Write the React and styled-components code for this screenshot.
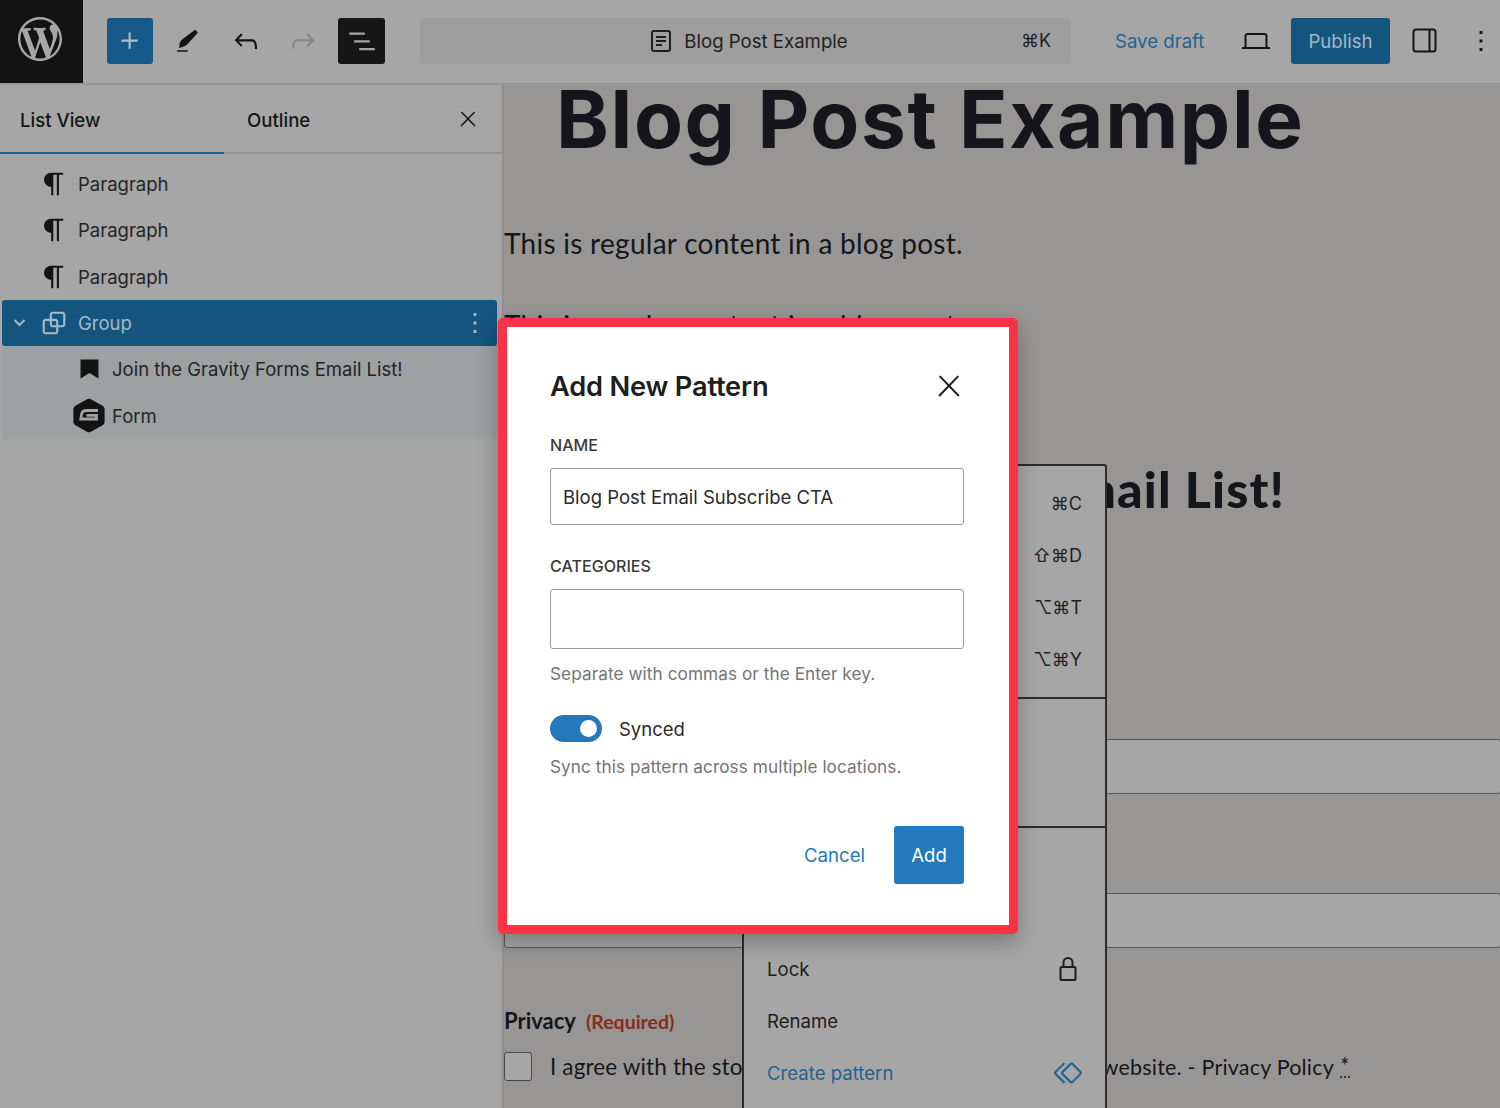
import React from 'react'
import styled, { createGlobalStyle } from 'styled-components'

const GlobalStyle = createGlobalStyle`
  html, body {
    margin: 0;
    padding: 0;
    height: 100%;
    overflow: hidden;
    background: #a6a6a6;
    font-family: Inter, 'Liberation Sans', sans-serif;
    color: #1a1a1a;
  }
  * { box-sizing: border-box; }
`

const Page = styled.div`
  position: relative;
  width: 1500px;
  height: 1108px;
  overflow: hidden;
`
const TopBar = styled.header`
  display: flex;
  align-items: center;
  height: 85px;
  padding-bottom: 2px;
  border-bottom: 2px solid #989898;
  background: #a6a6a6;
  white-space: nowrap;
`
const LogoBox = styled.div`
  display: flex;
  flex: none;
  align-items: center;
  justify-content: center;
  width: 83px;
  height: 85px;
  padding: 0 3px 3px 0;
  background: #131313;
  color: #a6a6a6;
`
const ToolGroup = styled.div`
  display: flex;
  flex: none;
  align-items: center;
  margin-left: ${(p) => p.$left || 0}px;
`
const ToolButton = styled.div`
  display: flex;
  flex: none;
  align-items: center;
  justify-content: center;
  width: ${(p) => p.$w || 46}px;
  height: 46px;
  margin-left: ${(p) => p.$left || 0}px;
  border-radius: 3px;
  background: ${(p) => p.$bg || 'transparent'};
  color: ${(p) => p.$color || '#141414'};
`
const CommandCenter = styled.div`
  position: relative;
  display: flex;
  flex: none;
  align-items: center;
  justify-content: center;
  gap: 11px;
  width: 651px;
  height: 46px;
  margin-left: 35px;
  padding-left: 6px;
  border-radius: 5px;
  background: #9e9e9e;
  font-size: 18.6px;
  color: #1f1f1f;
`
const Shortcut = styled.span`
  position: absolute;
  right: 20px;
  font-size: 18px;
  color: #1f1f1f;
`
const SaveDraft = styled.span`
  flex: none;
  width: 89px;
  margin-left: 44px;
  font-size: 18.6px;
  color: #1f6391;
`
const PublishButton = styled.div`
  display: flex;
  flex: none;
  align-items: center;
  justify-content: center;
  width: 99px;
  height: 46px;
  margin-left: 12px;
  border-radius: 3px;
  background: #14567f;
  color: #a6b6c2;
  font-size: 18.6px;
`
const Workspace = styled.div`
  display: flex;
  height: 1023px;
`
const Sidebar = styled.aside`
  flex: none;
  width: 504px;
  border-right: 2px solid #8f8f8f;
  background: #a6a6a6;
`
const Tabs = styled.div`
  display: flex;
  align-items: center;
  height: 69px;
  border-bottom: 2px solid #929292;
`
const Tab = styled.div`
  display: flex;
  align-items: center;
  width: 224px;
  height: 69px;
  margin-bottom: -2px;
  padding: 3px 0 0 ${(p) => p.$pad}px;
  border-bottom: 2px solid ${(p) => (p.$active ? '#1b5f8c' : 'transparent')};
  font-size: 18.6px;
  font-weight: 500;
  color: #161616;
`
const TabClose = styled.div`
  display: flex;
  margin-left: auto;
  margin-right: 22px;
  color: #161616;
`
const ListTree = styled.div`
  display: flex;
  flex-direction: column;
  width: 495px;
  margin-left: 2px;
  padding-top: 7px;
`
const Row = styled.div`
  display: flex;
  align-items: center;
  height: 46.3px;
  padding-left: ${(p) => p.$pad || 0}px;
  font-size: 18.5px;
  color: #242424;
`
const GroupRow = styled(Row)`
  border-radius: 3px;
  background: #14547f;
  color: #a3bacb;
`
const GroupChildren = styled.div`
  border-radius: 0 0 3px 3px;
  background: #9da1a2;
`
const RowIcon = styled.div`
  display: flex;
  flex: none;
  align-items: center;
  justify-content: center;
  width: ${(p) => p.$w || 34}px;
  margin-right: ${(p) => p.$gap || 7}px;
  color: ${(p) => p.$color || '#141414'};
`
const RowMore = styled.div`
  display: flex;
  margin-left: auto;
  margin-right: 5px;
`
const Canvas = styled.main`
  position: relative;
  flex: 1;
  overflow: hidden;
  background: #979694;
  color: #14161b;
  font-family: Lato, 'Open Sans', sans-serif;
`
const PostTitle = styled.h1`
  margin: 0 0 0 52px;
  height: 103px;
  font-family: Inter, sans-serif;
  font-size: 80px;
  line-height: 68px;
  font-weight: 700;
  letter-spacing: 1.65px;
  white-space: nowrap;
`
const BodyText = styled.p`
  margin: 0;
  height: ${(p) => p.$h || 78}px;
  padding-top: ${(p) => p.$pad || 37}px;
  font-size: 28px;
  line-height: 36px;
  letter-spacing: 0.27px;
  white-space: nowrap;
`
const FormHeading = styled.h2`
  margin: 111px 0 0;
  height: 64px;
  font-size: 50px;
  line-height: 60px;
  font-weight: 900;
  letter-spacing: 1.15px;
  white-space: nowrap;
`
const FakeInput = styled.div`
  width: 997px;
  height: 55px;
  margin-top: ${(p) => p.$top}px;
  border: 1.5px solid #55585c;
  border-radius: 3px;
  background: #a6a6a6;
`
const PrivacyLabel = styled.div`
  margin-top: 59px;
  font-size: 22px;
  line-height: 28px;
  font-weight: 700;
  white-space: nowrap;
`
const Required = styled.span`
  margin-left: 10px;
  font-size: 19.5px;
  color: #8a2a1c;
`
const ConsentRow = styled.div`
  display: flex;
  align-items: center;
  margin-top: 16px;
  font-size: 22.5px;
  letter-spacing: 0.13px;
  white-space: nowrap;
`
const ConsentTail = styled.span`
  margin-left: 0;
  font-size: 21.5px;
  letter-spacing: 0.2px;
`
const CheckBox = styled.span`
  flex: none;
  width: 28px;
  height: 29px;
  margin-right: 18px;
  border: 1.5px solid #45484c;
  border-radius: 3px;
  background: #a6a6a6;
`
const Asterisk = styled.span`
  margin-left: 6px;
  border-bottom: 2px dotted #33363a;
  line-height: 20px;
`
const BlockMenu = styled.div`
  position: absolute;
  top: 379px;
  left: 238px;
  width: 365px;
  height: 700px;
  border: 2px solid #2c2c2c;
  border-radius: 3px;
  background: #a6a6a6;
  font-family: Inter, sans-serif;
`
const MenuSection = styled.div`
  height: ${(p) => p.$h}px;
  padding: 11px 0;
  border-top: ${(p) => (p.$first ? 'none' : '2px solid #2c2c2c')};
`
const MenuRow = styled.div`
  display: flex;
  align-items: center;
  justify-content: space-between;
  height: 52px;
  padding: 0 23px;
  font-size: 18.6px;
  color: ${(p) => p.$color || '#1d1d1d'};
`
const MenuKeys = styled.span`
  font-size: 18px;
  color: #222;
`
const LockWrap = styled.span`
  display: flex;
  margin-right: 4px;
`
const SymbolWrap = styled.span`
  display: flex;
  margin-right: -3px;
`
const Modal = styled.div`
  position: absolute;
  top: 318px;
  left: 498px;
  width: 520px;
  height: 616px;
  padding: 40px 45px 0 43px;
  border: 9px solid #fb3246;
  border-radius: 5px;
  background: #fff;
  box-shadow: 0 8px 22px rgba(0, 0, 0, 0.28);
  color: #1e1e1e;
`
const ModalHead = styled.div`
  display: flex;
  align-items: center;
  justify-content: space-between;
  height: 38px;
`
const ModalTitle = styled.h2`
  margin: 0;
  font-size: 27.25px;
  font-weight: 600;
  letter-spacing: -0.2px;
`
const ModalClose = styled.div`
  display: flex;
  margin-right: -2px;
`
const FieldLabel = styled.label`
  display: block;
  margin-top: ${(p) => p.$top}px;
  font-size: 16.1px;
  line-height: 22px;
  font-weight: 500;
  color: #3a3a3a;
`
const TextField = styled.div`
  display: flex;
  align-items: center;
  height: ${(p) => p.$h}px;
  margin-top: 12px;
  padding-left: 12px;
  border: 1.5px solid #9a9a9a;
  border-radius: 3px;
  font-size: 18.5px;
  color: #2a2a2a;
`
const HelpText = styled.p`
  margin: ${(p) => p.$top}px 0 0;
  font-size: 17.2px;
  line-height: 24px;
  letter-spacing: 0.07px;
  color: #757575;
`
const ToggleRow = styled.div`
  display: flex;
  align-items: center;
  gap: 17px;
  margin-top: 29px;
  font-size: 18.5px;
  color: #2a2a2a;
`
const Toggle = styled.span`
  display: flex;
  align-items: center;
  justify-content: flex-end;
  width: 52px;
  height: 27px;
  padding-right: 5px;
  border-radius: 14px;
  background: #2379bb;
  &::after {
    content: '';
    width: 17px;
    height: 17px;
    border-radius: 50%;
    background: #fff;
  }
`
const ModalActions = styled.div`
  display: flex;
  align-items: center;
  justify-content: flex-end;
  gap: 29px;
  margin-top: 47px;
`
const CancelLink = styled.span`
  font-size: 18.6px;
  color: #2379bb;
`
const AddButton = styled.div`
  display: flex;
  align-items: center;
  justify-content: center;
  width: 70px;
  height: 58px;
  border-radius: 3px;
  background: #2379bb;
  color: #fff;
  font-size: 18.6px;
`

function Icon({ size = 24, box = 24, d, children, ...rest }) {
  return (
    <svg width={size} height={size} viewBox={`0 0 ${box} ${box}`} fill="currentColor" {...rest}>
      {d && <path d={d} />}
      {children}
    </svg>
  )
}

const wp =
  'M20 10c0-5.51-4.49-10-10-10C4.48 0 0 4.49 0 10c0 5.52 4.48 10 10 10 5.51 0 10-4.48 10-10zM7.78 15.37L4.37 6.22c.55-.02 1.17-.08 1.17-.08.5-.06.44-1.13-.06-1.11 0 0-1.45.11-2.37.11-.18 0-.37 0-.58-.01C4.12 2.69 6.87 1.11 10 1.11c2.33 0 4.45.87 6.05 2.34-.68-.11-1.65.39-1.65 1.58 0 .74.45 1.36.9 2.1.35.61.55 1.36.55 2.46 0 1.49-1.4 5-1.4 5l-3.03-8.37c.54-.02.82-.17.82-.17.5-.05.44-1.25-.06-1.22 0 0-1.44.12-2.38.12-.87 0-2.33-.12-2.33-.12-.5-.03-.56 1.2-.06 1.22l.92.08 1.26 3.41zM17.41 10c.24-.64.74-1.87.43-4.25.7 1.29 1.05 2.71 1.05 4.25 0 3.29-1.73 6.24-4.4 7.78.97-2.59 1.94-5.2 2.92-7.78zM6.1 18.09C3.12 16.65 1.11 13.53 1.11 10c0-1.3.23-2.48.72-3.59C3.25 10.3 4.67 14.2 6.1 18.09zm4.03-6.63l2.58 6.98c-.86.29-1.76.45-2.71.45-.79 0-1.57-.11-2.29-.33.81-2.38 1.62-4.74 2.42-7.1z'
const plus = 'M11 12.5V17.5H12.5V12.5H17.5V11H12.5V6H11V11H6V12.5H11Z'
const undo =
  'M18.3 11.7c-.6-.6-1.4-.9-2.3-.9H6.7l2.9-3.3-1.1-1-4.5 5L8.5 16l1-1-2.7-2.7H16c.5 0 .9.2 1.3.5 1 1 1 3.4 1 4.5v.3h1.5v-.2c0-1.5 0-4.3-1.5-5.7z'
const redo =
  'M15.6 6.5l-1.1 1 2.9 3.3H8c-.9 0-1.7.3-2.3.9-1.4 1.5-1.4 4.2-1.4 5.6v.2h1.5v-.3c0-1.1 0-3.5 1-4.5.3-.3.7-.5 1.3-.5h9.2L14.5 15l1.1 1.1 4.6-4.6-4.6-5z'
const listView = 'M3 6h11v1.5H3V6Zm3.5 5.5h11V13h-11v-1.5ZM21 17H10v1.5h11V17Z'
const paragraph =
  'm9.99609 14v-.2251l.00391.0001v6.225h1.5v-14.5h2.5v14.5h1.5v-14.5h3v-1.5h-8.50391c-2.76142 0-5 2.23858-5 5 0 2.7614 2.23858 5 5 5z'
const group =
  'M18 4h-7c-1.1 0-2 .9-2 2v3H6c-1.1 0-2 .9-2 2v7c0 1.1.9 2 2 2h7c1.1 0 2-.9 2-2v-3h3c1.1 0 2-.9 2-2V6c0-1.1-.9-2-2-2zm-4.5 14c0 .3-.2.5-.5.5H6c-.3 0-.5-.2-.5-.5v-7c0-.3.2-.5.5-.5h3V13c0 1.1.9 2 2 2h2.5v3zm0-4.5H11c-.3 0-.5-.2-.5-.5v-2.5H13c.3 0 .5.2.5.5v2.5zm5-.5c0 .3-.2.5-.5.5h-3V11c0-1.1-.9-2-2-2h-2.5V6c0-.3.2-.5.5-.5h7c.3 0 .5.2.5.5v7z'
const kebab = 'M13 19h-2v-2h2v2zm0-6h-2v-2h2v2zm0-6h-2V5h2v2z'
const close =
  'M13 11.8l6.1-6.3-1-1-6.1 6.2-6.1-6.2-1 1 6.1 6.3-6.5 6.7 1 1 6.5-6.6 6.5 6.6 1-1z'
const symbol =
  'M21.3 10.8l-5.6-5.6c-.7-.7-1.8-.7-2.5 0l-5.6 5.6c-.7.7-.7 1.8 0 2.5l5.6 5.6c.3.3.8.5 1.2.5s.9-.2 1.2-.5l5.6-5.6c.8-.7.8-1.9.1-2.5zm-1 1.4l-5.6 5.6c-.1.1-.3.1-.4 0l-5.6-5.6c-.1-.1-.1-.3 0-.4l5.6-5.6s.1-.1.2-.1.1 0 .2.1l5.6 5.6c.1.1.1.3 0 .4zm-16.6-.4L10 5.5l-1-1-6.3 6.3c-.7.7-.7 1.8 0 2.5L9 19.5l1.1-1.1-6.3-6.3c-.2 0-.2-.2-.1-.3z'

function PenIcon() {
  return (
    <Icon size={34}>
      <path d="M5 18.5h7.5v1.1H5zM17.2 4.4c.4-.2.8-.2 1.1.1l.9 1c.3.3.3.8.1 1.1l-6.5 7.2c-.7.8-1.7 1.5-2.6 1.9L6.4 17l.4-3.5c.3-1 .9-1.9 1.7-2.6z" />
    </Icon>
  )
}

function DocIcon() {
  return (
    <svg width="24" height="26" viewBox="0 0 24 26" fill="none" stroke="currentColor" strokeWidth="2">
      <rect x="3" y="3" width="18" height="20" rx="2" />
      <path d="M7 9h10M7 13h10M7 17h6" />
    </svg>
  )
}

function LaptopIcon() {
  return (
    <svg width="30" height="20" viewBox="0 0 30 20" fill="none" stroke="currentColor" strokeWidth="2">
      <path d="M4.5 16V5a2 2 0 0 1 2-2h17a2 2 0 0 1 2 2v11" />
      <path d="M1 17h28" />
    </svg>
  )
}

function PanelIcon() {
  return (
    <svg width="25" height="25" viewBox="0 0 25 25" fill="none" stroke="currentColor" strokeWidth="2">
      <rect x="1.5" y="1.5" width="22" height="22" rx="2.5" />
      <path d="M17.5 1.5v22" />
    </svg>
  )
}

function LockIcon() {
  return (
    <svg width="20" height="26" viewBox="0 0 20 26" fill="none" stroke="currentColor" strokeWidth="2">
      <rect x="2.5" y="11" width="15" height="13" rx="1" />
      <path d="M5.5 11V6.5a4.5 4.5 0 0 1 9 0V11" />
    </svg>
  )
}

function BookmarkIcon() {
  return (
    <svg width="19" height="20" viewBox="0 0 19 20">
      <path d="M0.5 0.5h18v19l-9-5.5-9 5.5z" fill="currentColor" />
    </svg>
  )
}

function FormIcon() {
  return (
    <svg width="32" height="35" viewBox="0 0 32 35">
      <path
        d="M14 1.2c1.2-.7 2.8-.7 4 0l11.6 6.6c1.2.7 2 2 2 3.4v12.6c0 1.4-.8 2.7-2 3.4L18 33.8c-1.2.7-2.8.7-4 0L2.4 27.2c-1.2-.7-2-2-2-3.4V11.2c0-1.4.8-2.7 2-3.4z"
        fill="#131313"
      />
      <path
        d="M25 12.5H13c-2.5 0-4 1.5-4.5 4l-.7 4.5H23.5v-3.6H13.5"
        fill="none"
        stroke="#a0a3a4"
        strokeWidth="2.8"
      />
    </svg>
  )
}

function ParagraphRow() {
  return (
    <Row $pad={35}>
      <RowIcon>
        <Icon size={34} d={paragraph} />
      </RowIcon>
      Paragraph
    </Row>
  )
}

export default function App() {
  return (
    <Page>
      <GlobalStyle />
      <TopBar>
        <LogoBox>
          <Icon size={44} box={20} d={wp} />
        </LogoBox>
        <ToolGroup $left={24}>
          <ToolButton $bg="#165a8a" $color="#a3c0d3">
            <Icon size={34} d={plus} />
          </ToolButton>
          <ToolButton $left={11}>
            <PenIcon />
          </ToolButton>
          <ToolButton $left={13}>
            <Icon size={34} d={undo} />
          </ToolButton>
          <ToolButton $left={11} $color="#868686">
            <Icon size={34} d={redo} />
          </ToolButton>
          <ToolButton $left={12} $w={47} $bg="#161616" $color="#a6a6a6">
            <Icon size={34} d={listView} />
          </ToolButton>
        </ToolGroup>
        <CommandCenter>
          <DocIcon />
          Blog Post Example
          <Shortcut>⌘K</Shortcut>
        </CommandCenter>
        <SaveDraft>Save draft</SaveDraft>
        <ToolButton $left={29}>
          <LaptopIcon />
        </ToolButton>
        <PublishButton>Publish</PublishButton>
        <ToolButton $left={11}>
          <PanelIcon />
        </ToolButton>
        <ToolButton $left={11}>
          <Icon size={34} d={kebab} />
        </ToolButton>
      </TopBar>

      <Workspace>
        <Sidebar>
          <Tabs>
            <Tab $active $pad={20}>List View</Tab>
            <Tab $pad={23}>Outline</Tab>
            <TabClose>
              <Icon size={24} d={close} />
            </TabClose>
          </Tabs>
          <ListTree>
            <ParagraphRow />
            <ParagraphRow />
            <ParagraphRow />
            <GroupRow $pad={5}>
              <RowIcon $w={24} $gap={6} $color="#a3bacb">
                <svg width="15" height="10" viewBox="0 0 15 10" fill="none" stroke="currentColor" strokeWidth="2">
                  <path d="M2.5 2l5 5 5-5" />
                </svg>
              </RowIcon>
              <RowIcon $color="#a3bacb">
                <Icon size={34} d={group} />
              </RowIcon>
              Group
              <RowMore>
                <Icon size={34} d={kebab} />
              </RowMore>
            </GroupRow>
            <GroupChildren>
              <Row $pad={70}>
                <RowIcon $gap={6}>
                  <BookmarkIcon />
                </RowIcon>
                Join the Gravity Forms Email List!
              </Row>
              <Row $pad={70}>
                <RowIcon $gap={6}>
                  <FormIcon />
                </RowIcon>
                Form
              </Row>
            </GroupChildren>
          </ListTree>
        </Sidebar>

        <Canvas>
          <PostTitle>Blog Post Example</PostTitle>
          <BodyText>This is regular content in a blog post.</BodyText>
          <BodyText $pad={41} $h={82}>This is regular content in a blog post.</BodyText>
          <FormHeading>Join the Gravity Forms Email List!</FormHeading>
          <FakeInput $top={216} />
          <FakeInput $top={99} />
          <PrivacyLabel>
            Privacy<Required>(Required)</Required>
          </PrivacyLabel>
          <ConsentRow>
            <CheckBox />
            I agree with the storage and handling of my data by this
            <ConsentTail>website. - Privacy Policy</ConsentTail>
            <Asterisk>*</Asterisk>
          </ConsentRow>

          <BlockMenu>
            <MenuSection $first $h={231}>
              <MenuRow><span /><MenuKeys>⌘C</MenuKeys></MenuRow>
              <MenuRow><span /><MenuKeys>⇧⌘D</MenuKeys></MenuRow>
              <MenuRow><span /><MenuKeys>⌥⌘T</MenuKeys></MenuRow>
              <MenuRow><span /><MenuKeys>⌥⌘Y</MenuKeys></MenuRow>
            </MenuSection>
            <MenuSection $h={129} />
            <MenuSection $h={300}>
              <MenuRow />
              <MenuRow />
              <MenuRow>
                Lock
                <LockWrap>
                  <LockIcon />
                </LockWrap>
              </MenuRow>
              <MenuRow>Rename</MenuRow>
              <MenuRow $color="#1f6391">
                Create pattern
                <SymbolWrap>
                  <Icon size={34} d={symbol} />
                </SymbolWrap>
              </MenuRow>
            </MenuSection>
          </BlockMenu>
        </Canvas>
      </Workspace>

      <Modal>
        <ModalHead>
          <ModalTitle>Add New Pattern</ModalTitle>
          <ModalClose>
            <Icon size={34} d={close} />
          </ModalClose>
        </ModalHead>
        <FieldLabel $top={29}>NAME</FieldLabel>
        <TextField $h={57}>Blog Post Email Subscribe CTA</TextField>
        <FieldLabel $top={30}>CATEGORIES</FieldLabel>
        <TextField $h={60} />
        <HelpText $top={13}>Separate with commas or the Enter key.</HelpText>
        <ToggleRow>
          <Toggle />
          Synced
        </ToggleRow>
        <HelpText $top={13}>Sync this pattern across multiple locations.</HelpText>
        <ModalActions>
          <CancelLink>Cancel</CancelLink>
          <AddButton>Add</AddButton>
        </ModalActions>
      </Modal>
    </Page>
  )
}
